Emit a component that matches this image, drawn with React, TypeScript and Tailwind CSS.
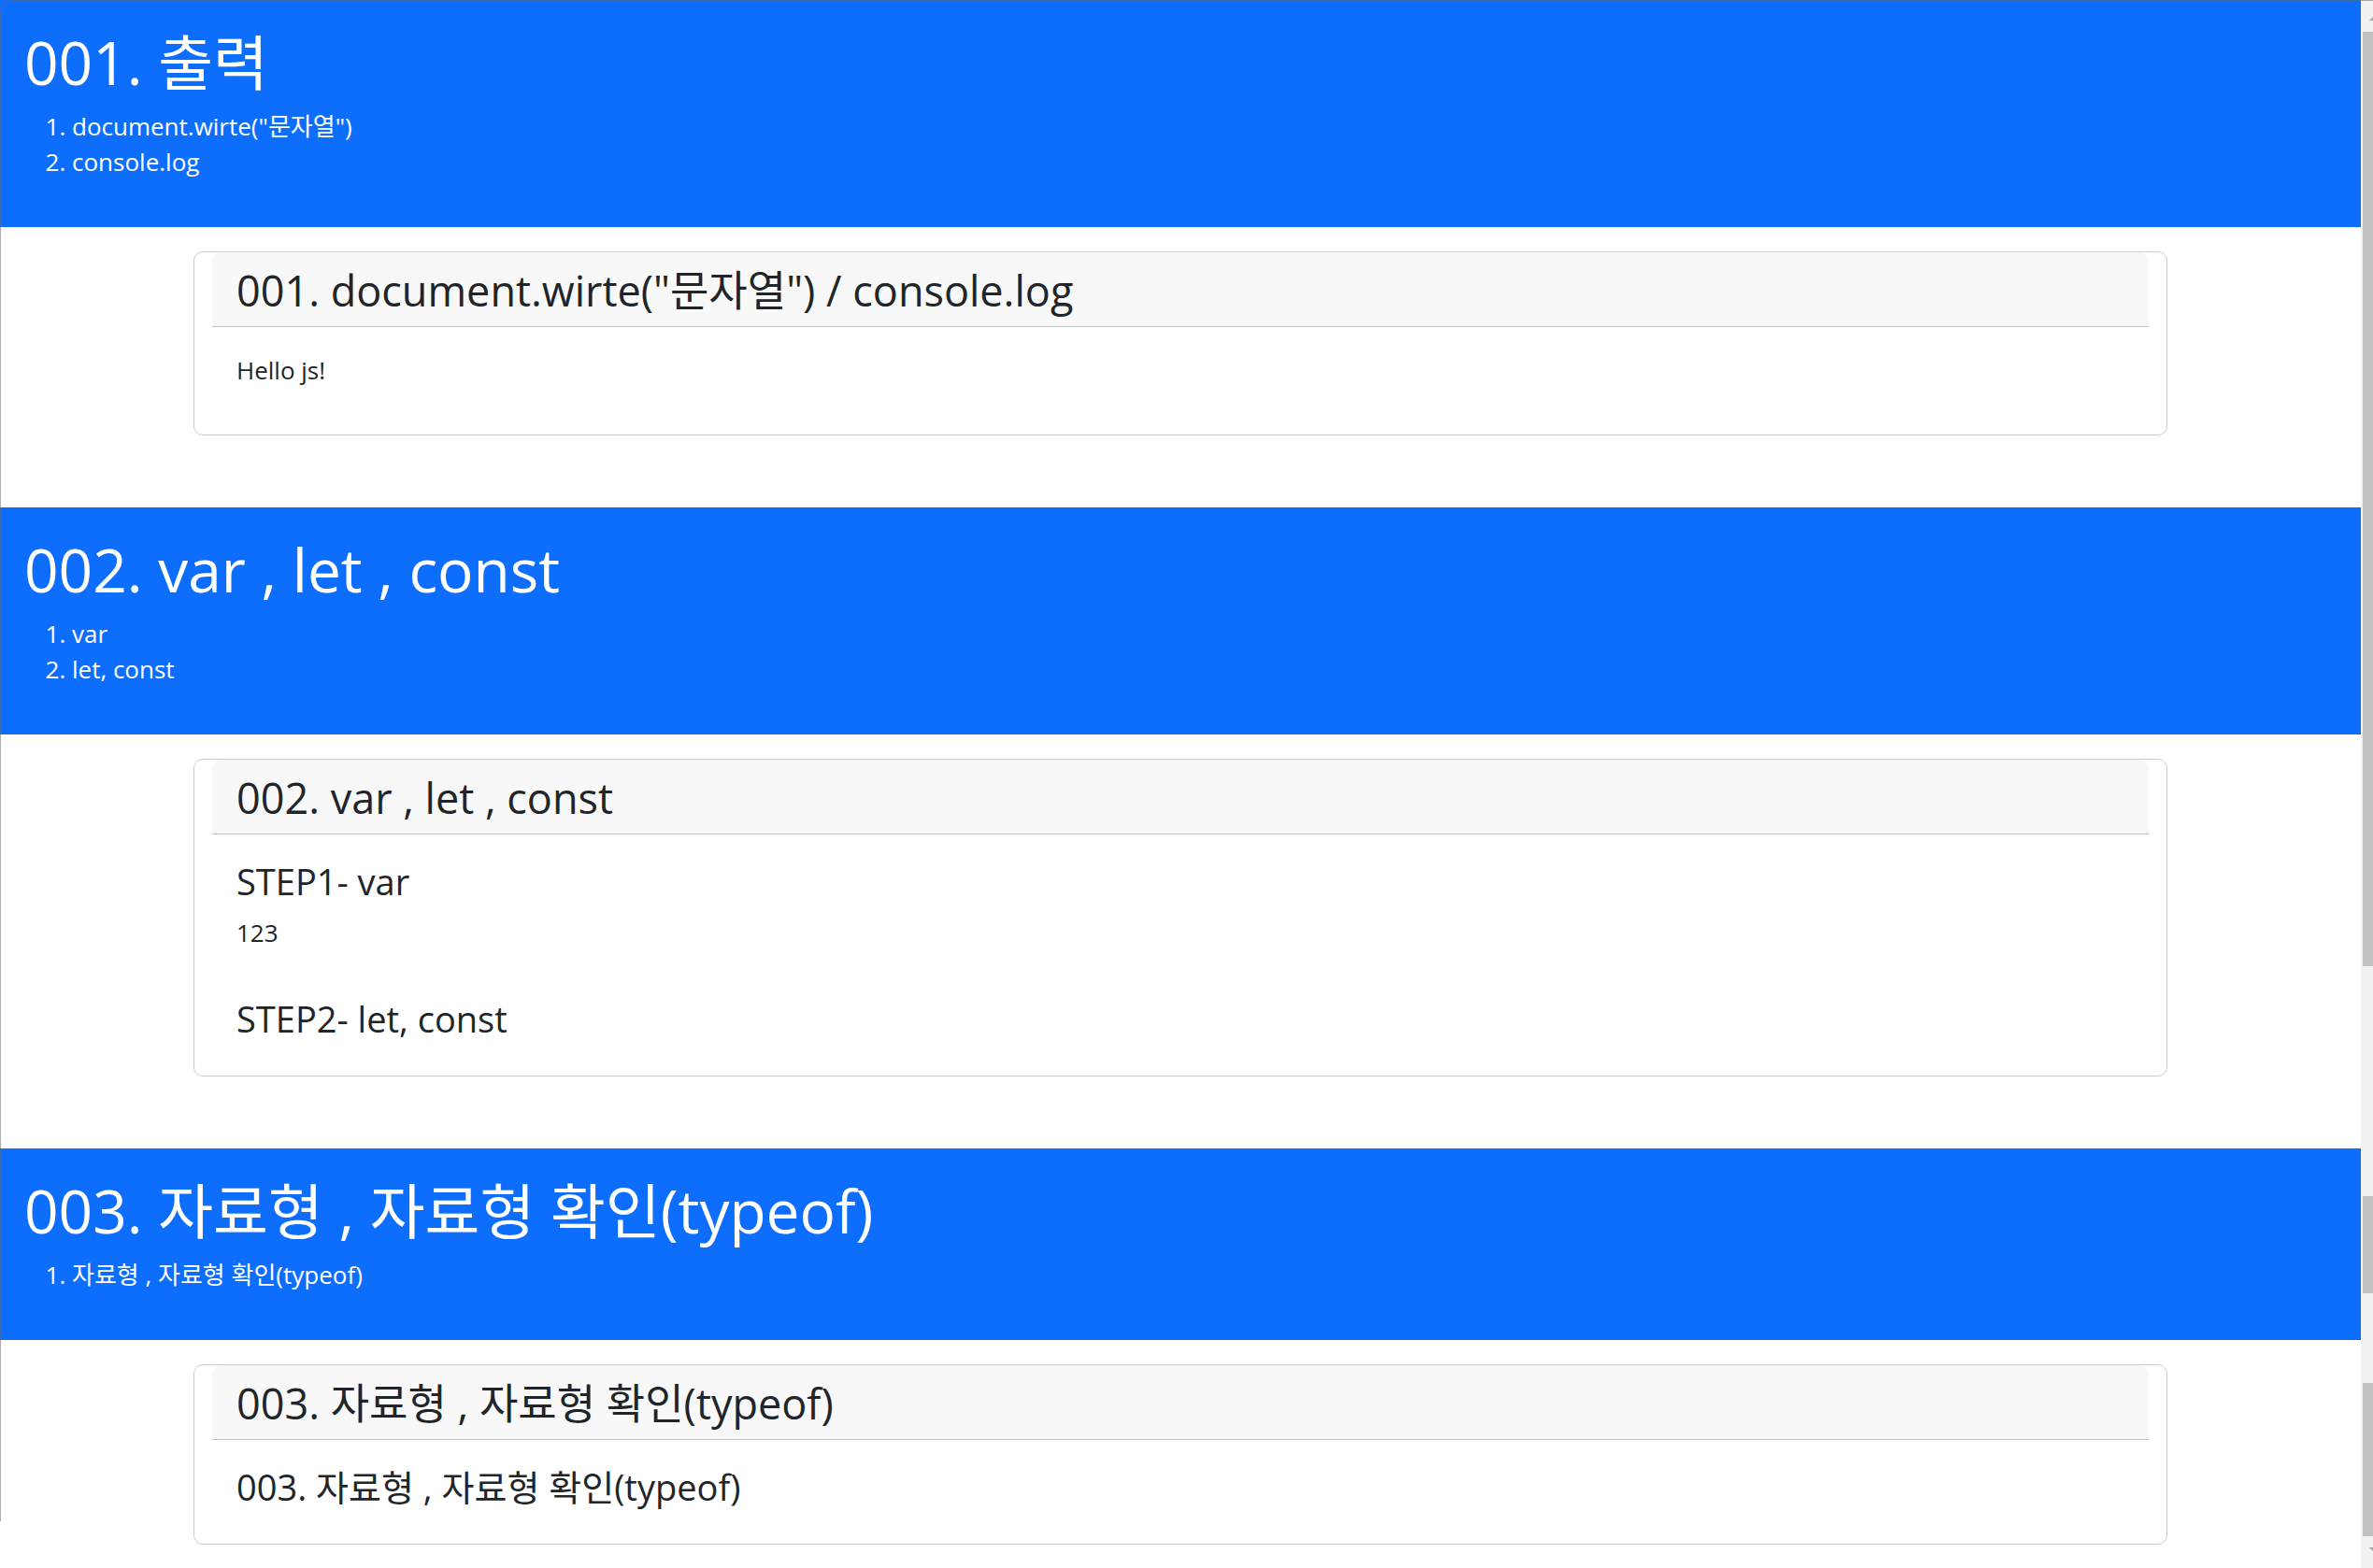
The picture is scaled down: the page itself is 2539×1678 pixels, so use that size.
import type { ReactNode } from "react";

function Banner({ title, items }: { title: string; items: string[] }) {
  return (
    <header className="bg-[#0d6efd] px-[26px] pt-[28px] pb-[25px] text-white">
      <h1 className="mb-[11px] text-[64px] leading-[77px]">{title}</h1>
      <ol className="mb-[26px] list-decimal pl-[51px]">
        {items.map((item) => (
          <li key={item}>{item}</li>
        ))}
      </ol>
    </header>
  );
}

function Card({ title, children }: { title: string; children: ReactNode }) {
  return (
    <article className="mx-auto mt-[26px] w-full max-w-[2112px] rounded-[10px] border border-[#cbcbcb] bg-white px-[19px]">
      <div className="rounded-t-[9px] border-b border-[#c2c2c2] bg-[#f8f8f8] px-[26px] pt-[14px] pb-[12px]">
        <h3 className="text-[45px] leading-[53px]">{title}</h3>
      </div>
      <div className="px-[26px] pt-[27px] pb-[25px]">{children}</div>
    </article>
  );
}

function StepTitle({ children }: { children: ReactNode }) {
  return <h4 className="mb-[13px] text-[38px] leading-[46px]">{children}</h4>;
}

function ScrollTrack() {
  return (
    <div aria-hidden="true" className="flex w-[13px] shrink-0 flex-col bg-[#f1f1f1] pl-[2px]">
      <div className="flex h-[34px] shrink-0 justify-end pt-[18px]">
        <svg width="4" height="4" viewBox="0 0 4 4">
          <path d="M0 4 4 0V4Z" fill="#a3a3a3" />
        </svg>
      </div>
      <div className="flex-[1000] bg-[#c1c1c1]" />
      <div className="flex-[246]" />
      <div className="flex-[104] bg-[#c1c1c1]" />
      <div className="flex-[96]" />
      <div className="flex-[164] bg-[#c1c1c1]" />
      <div className="flex h-[34px] shrink-0 justify-end pt-[12px]">
        <svg width="4" height="4" viewBox="0 0 4 4">
          <path d="M0 0H4V4Z" fill="#a3a3a3" />
        </svg>
      </div>
    </div>
  );
}

export default function App() {
  return (
    <div className="relative flex h-screen overflow-hidden bg-white font-['Open_Sans','Noto_Sans_CJK_KR',sans-serif] text-[26px] leading-[38px] text-[#212529]">
      <main className="flex min-w-0 flex-1 flex-col gap-[77px]">
        <section>
          <Banner title="001. 출력" items={['document.wirte("문자열")', "console.log"]} />
          <Card title={'001. document.wirte("문자열") / console.log'}>
            <p className="mb-[25px]">Hello js!</p>
          </Card>
        </section>
        <section>
          <Banner title="002. var , let , const" items={["var", "let, const"]} />
          <Card title="002. var , let , const">
            <StepTitle>STEP1- var</StepTitle>
            <p className="mb-[50px]">123</p>
            <StepTitle>STEP2- let, const</StepTitle>
          </Card>
        </section>
        <section>
          <Banner title="003. 자료형 , 자료형 확인(typeof)" items={["자료형 , 자료형 확인(typeof)"]} />
          <Card title="003. 자료형 , 자료형 확인(typeof)">
            <StepTitle>003. 자료형 , 자료형 확인(typeof)</StepTitle>
          </Card>
        </section>
      </main>
      <ScrollTrack />
      <div className="pointer-events-none absolute inset-x-0 top-0 bottom-[50px] rounded-tl-[14px] border-t border-l border-[#68686888]" />
    </div>
  );
}
